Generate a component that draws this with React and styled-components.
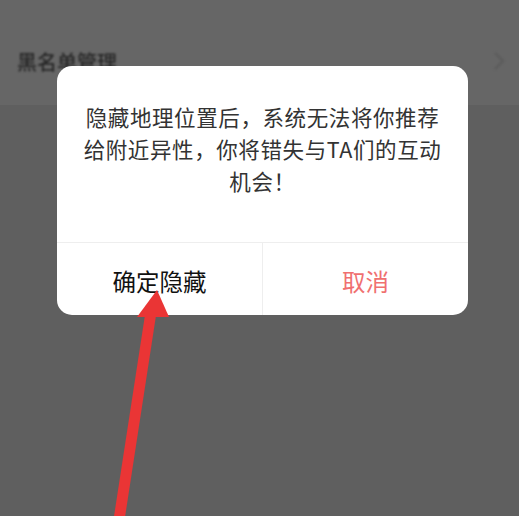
import React from "react";
import styled, { createGlobalStyle } from "styled-components";

const Global = createGlobalStyle`
  html, body { margin: 0; padding: 0; }
  body {
    width: 519px;
    height: 516px;
    overflow: hidden;
    background: #5f5f5f;
    font-family: "Noto Sans CJK SC", "Noto Sans", sans-serif;
  }
`;

const Page = styled.div`
  position: relative;
  width: 519px;
  height: 516px;
  background: #5f5f5f;
  overflow: hidden;
`;

const ListArea = styled.div`
  height: 105px;
  background: #666666;
  display: flex;
  flex-direction: column;
  justify-content: flex-end;
`;

const Row = styled.div`
  height: 70px;
  display: flex;
  align-items: center;
  justify-content: space-between;
  padding: 0 14px 10px 17px;
  box-sizing: border-box;
`;

const RowLabel = styled.span`
  font-size: 20px;
  font-weight: 500;
  color: #262626;
  filter: blur(0.8px);
  margin-top: -8px;
`;

const Chevron = styled.svg`
  width: 12px;
  height: 20px;
  margin-top: -8px;
  filter: blur(0.8px);
`;

const Dialog = styled.div`
  position: absolute;
  left: 57px;
  top: 66px;
  width: 411px;
  height: 249px;
  background: #ffffff;
  border-radius: 15px;
  display: flex;
  flex-direction: column;
  overflow: hidden;
`;

const Message = styled.div`
  height: 176px;
  box-sizing: border-box;
  padding: 35px 22px 0;
  text-align: center;
  font-size: 21.5px;
  line-height: 32px;
  color: #333333;
  letter-spacing: 0.6px;
`;

const Actions = styled.div`
  flex: 1;
  display: grid;
  grid-template-columns: 205px 1fr;
  border-top: 1px solid #eeeeee;
`;

const Action = styled.div`
  display: flex;
  align-items: center;
  justify-content: center;
  font-size: 23.5px;
  font-weight: 400;
  color: ${(p) => (p.$danger ? "#f07070" : "#111111")};
  border-left: ${(p) => (p.$divider ? "1px solid #eeeeee" : "none")};
  padding-top: 4px;
`;

const Arrow = styled.svg`
  position: absolute;
  left: 0;
  top: 0;
  width: 519px;
  height: 516px;
  pointer-events: none;
`;

export default function App() {
  return (
    <>
      <Global />
      <Page>
        <ListArea>
          <Row>
            <RowLabel>黑名单管理</RowLabel>
            <Chevron viewBox="0 0 12 20">
              <path d="M2 2 L10 10 L2 18" fill="none" stroke="#5a5a5a" strokeWidth="1.8" />
            </Chevron>
          </Row>
        </ListArea>
        <Dialog>
          <Message>
            隐藏地理位置后，系统无法将你推荐
            <br />
            给附近异性，你将错失与TA们的互动
            <br />
            机会！
          </Message>
          <Actions>
            <Action>确定隐藏</Action>
            <Action $danger $divider>取消</Action>
          </Actions>
        </Dialog>
        <Arrow viewBox="0 0 519 516">
          <path d="M119 520 L151 312" stroke="#ea3535" strokeWidth="11" strokeLinecap="butt" fill="none" />
          <polygon points="157,290 137,317 169,317" fill="#ea3535" />
        </Arrow>
      </Page>
    </>
  );
}
